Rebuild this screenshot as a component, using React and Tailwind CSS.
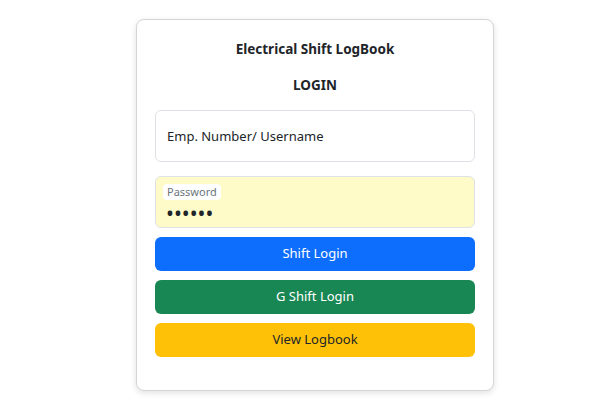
import React, { useState } from 'react'

const App = () => {
  const [username, setUsername] = useState('')
  const [password, setPassword] = useState('123456')

  return (
    <div className="min-h-[400px] w-[600px] bg-white font-['Noto_Sans',sans-serif] text-[#212529]">
      <div className="flex justify-center pl-[30px] pt-[19px]">
        <div className="w-[358px] rounded-lg border border-[#d5d5d5] bg-white px-[18px] pb-[33px] pt-[20px] shadow-[0_2px_6px_rgba(0,0,0,0.12)]">
          <div className="text-center text-[13.5px] font-bold leading-[18px]">Electrical Shift LogBook</div>
          <div className="mt-[18px] text-center text-[13.5px] font-bold leading-[18px]">LOGIN</div>

          <div className="mt-[16px] flex flex-col">
            <input
              type="text"
              value={username}
              onChange={(e) => setUsername(e.target.value)}
              placeholder="Emp. Number/ Username"
              className="h-[52px] w-full rounded-md border border-[#dee2e6] bg-white px-[11px] text-[13px] text-[#212529] outline-none placeholder:text-[#212529]"
            />

            <div className="relative mt-[14px] h-[52px] w-full rounded-md border border-[#dee2e6] bg-[#fffbc8]">
              <span className="absolute left-[7px] top-[7px] rounded bg-white px-[4px] text-[11px] leading-[16px] text-[#6c757d]">Password</span>
              <input
                type="password"
                value={password}
                onChange={(e) => setPassword(e.target.value)}
                className="absolute bottom-[2px] left-[10px] right-[11px] h-[24px] bg-transparent text-[21px] leading-[24px] text-[#212529] outline-none"
              />
            </div>

            <button className="mt-[9px] h-[34px] w-full rounded-md bg-[#0d6efd] text-[13px] text-white">Shift Login</button>
            <button className="mt-[9px] h-[34px] w-full rounded-md bg-[#198754] text-[13px] text-white">G Shift Login</button>
            <button className="mt-[9px] h-[34px] w-full rounded-md bg-[#ffc107] text-[13px] text-[#212529]">View Logbook</button>
          </div>
        </div>
      </div>
    </div>
  )
}

export default App
